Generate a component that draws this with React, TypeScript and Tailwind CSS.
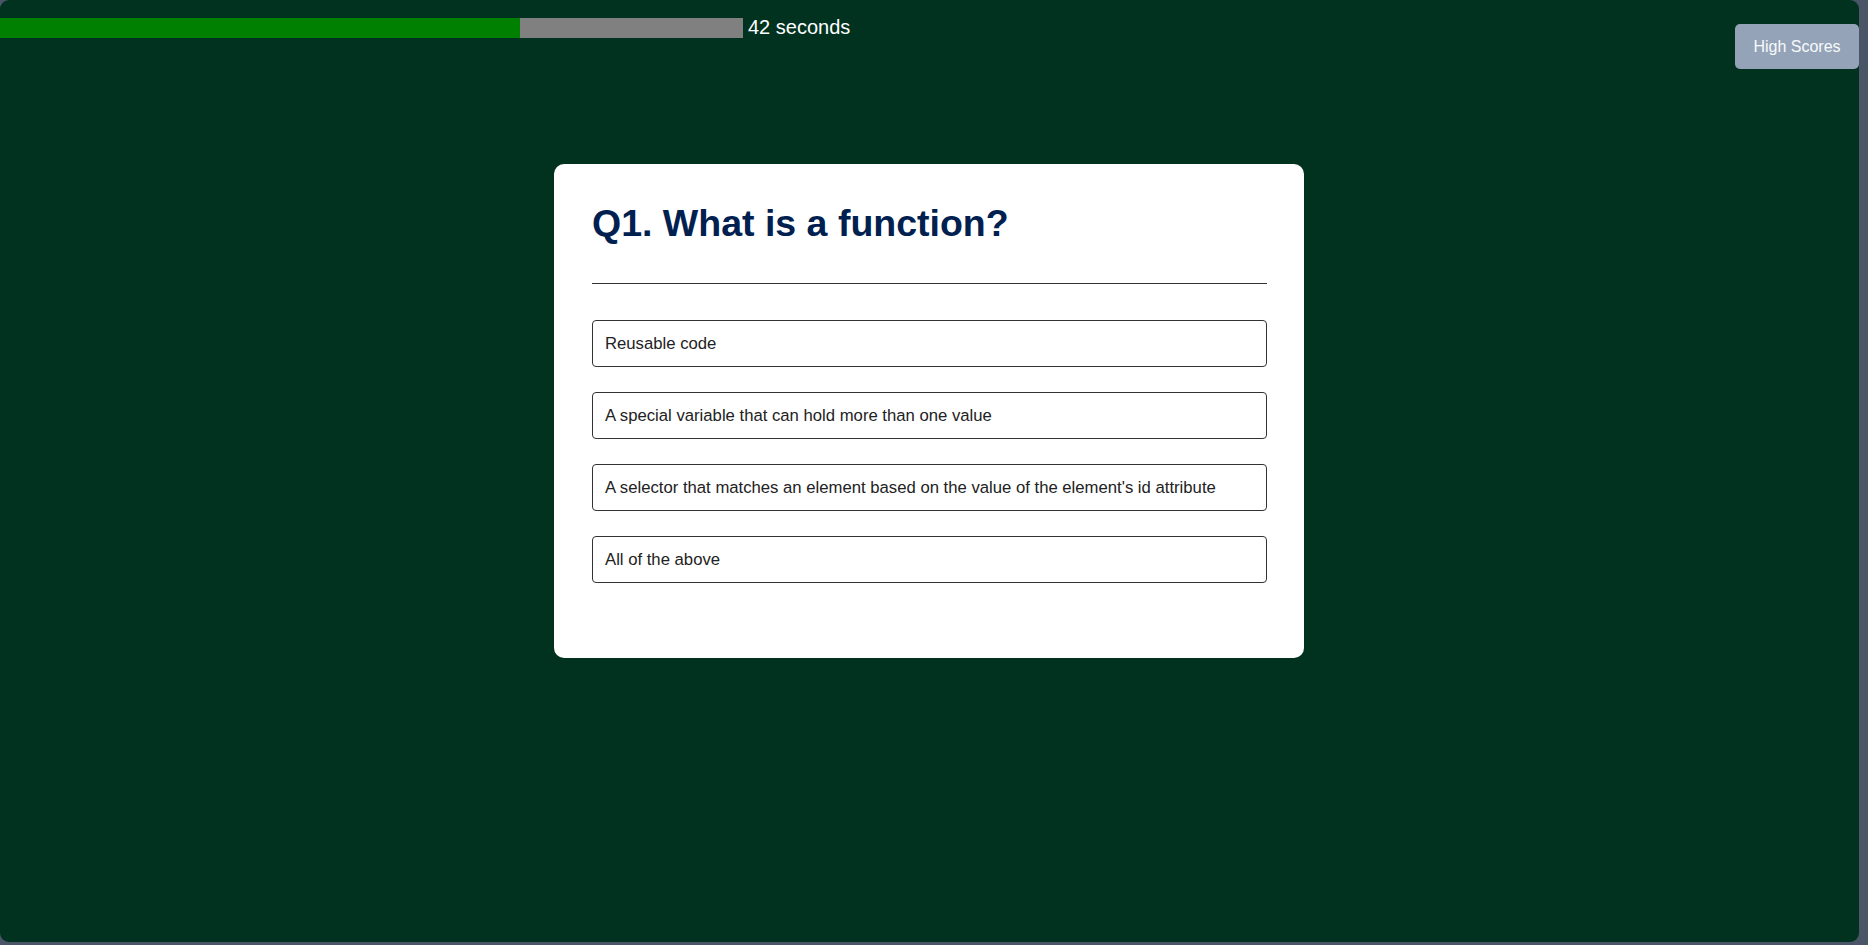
const options = [
  'Reusable code',
  'A special variable that can hold more than one value',
  "A selector that matches an element based on the value of the element's id attribute",
  'All of the above',
];

const secondsLeft = 42;
const total = 60;

export default function App() {
  return (
    <div className="h-[945px] w-[1868px] bg-[#4a5568] font-['Liberation_Sans',Arial,sans-serif]">
      <div className="flex h-[942px] w-[1859px] flex-col rounded-[9px] bg-[#01321f]">
        <header className="flex items-start justify-between pt-[14px]">
          <div className="flex items-start">
            <div className="mt-[4px] flex h-[20px] w-[743px] bg-[#808080]">
              <div
                className="h-full bg-[#008000]"
                style={{ width: `${(secondsLeft / total) * 100}%` }}
              />
            </div>
            <span className="ml-[5px] mt-[2px] text-[20px] leading-[23px] text-white">
              {secondsLeft} seconds
            </span>
          </div>
          <button className="mt-[10px] h-[45px] w-[124px] rounded-[5px] bg-[#94a3b8] text-[16px] text-[#f8fafc]">
            High Scores
          </button>
        </header>

        <main className="ml-[554px] mt-[95px] w-[750px] rounded-[10px] bg-white pb-[75px] pl-[38px] pr-[37px] pt-[38px]">
          <h1 className="text-[37.5px] font-bold leading-[43px] text-[#002050]">
            Q1. What is a function?
          </h1>
          <hr className="mt-[38px] border-t border-[#333]" />
          <ul className="mt-[36px] flex flex-col gap-[25px]">
            {options.map((o) => (
              <li key={o}>
                <button className="flex h-[47px] w-full items-center rounded-[4px] border border-[#333] px-[12px] text-left text-[16.7px] text-[#222]">
                  {o}
                </button>
              </li>
            ))}
          </ul>
        </main>
      </div>
    </div>
  );
}
